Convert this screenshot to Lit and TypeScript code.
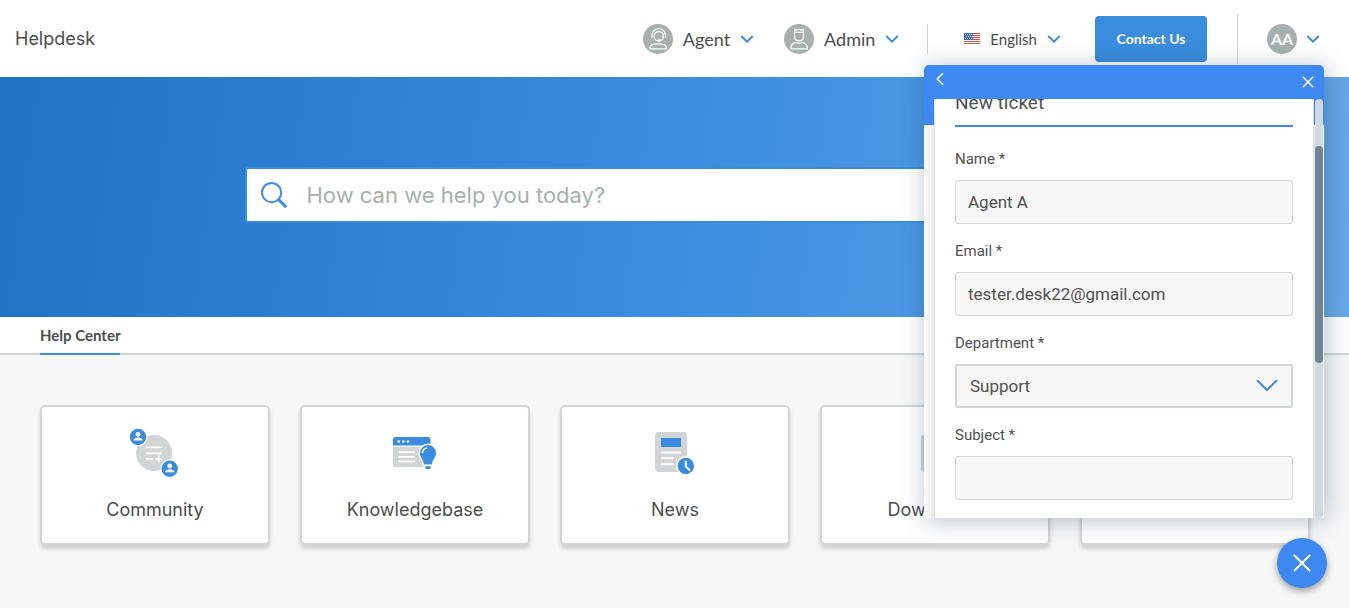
import { LitElement, html, svg, css, nothing } from "lit";
import { customElement, property } from "lit/decorators.js";

const chevron = html`<svg class="chevron" width="14" height="10" viewBox="0 0 14 10" aria-hidden="true">
  <path d="M1.3 2 L7 7.6 L12.7 2" fill="none" stroke="#3a8dde" stroke-width="2" />
</svg>`;

const person = (x: number, y: number) => svg`
  <circle cx=${x} cy=${y} r="9.4" fill="#fff" />
  <circle cx=${x} cy=${y} r="8.2" fill="#3a8dde" />
  <circle cx=${x} cy=${y - 2.7} r="2.4" fill="#fff" />
  <path transform="translate(${x} ${y})" d="M-4.7 3.6 C-4.5 1.4 -2 .6 0 .6 S4.5 1.4 4.7 3.6 Z" fill="#fff" />`;

const icons: Record<string, unknown> = {
  community: svg`
    <circle cx="23" cy="24" r="18" fill="#d1d5d5" />
    <path d="M15 18.3H31M15 24.3H31M15 30H22M24.2 30H31.2M27.7 26.5V33.5" stroke="#fff" stroke-width="1.7" />
    ${person(7, 8)} ${person(38.7, 39.7)}`,
  knowledge: svg`
    <path d="M2 17.7H39.5V38H4.5A2.5 2.5 0 0 1 2 35.5Z" fill="#d1d5d5" />
    <path d="M2 16.4V10.5A2.5 2.5 0 0 1 4.5 8H37A2.5 2.5 0 0 1 39.5 10.5V16.4Z" fill="#3a8dde" />
    <g fill="#fff"><circle cx="7.7" cy="12.5" r="1.3" /><circle cx="12.3" cy="12.5" r="1.3" /><circle cx="17" cy="12.5" r="1.3" /></g>
    <path d="M8 23.2H23.2M8 27.8H23.2M8 32.3H23.2" stroke="#fff" stroke-width="1.8" stroke-linecap="round" />
    <path d="M37 16A8.1 8.1 0 0 0 28.9 24.2C28.9 28.6 32.6 30 33 35.6H41C41.4 30 45.1 28.6 45.1 24.2A8.1 8.1 0 0 0 37 16ZM34.4 37.2H39.6V40H34.4Z" fill="#3a8dde" stroke="#fff" stroke-width="3" paint-order="stroke" />
    <path d="M31.4 23.6A5.5 5.5 0 0 1 35.6 18.9" fill="none" stroke="#fff" stroke-width="1.5" stroke-linecap="round" />`,
  news: svg`
    <rect x="4" y="3" width="32" height="40" rx="3" fill="#d1d5d5" />
    <rect x="10" y="9" width="20" height="9" fill="#3a8dde" />
    <path d="M10.8 23.4H29.2M10.8 29.2H22M10.8 35.3H22" stroke="#fff" stroke-width="2" stroke-linecap="round" />
    <circle cx="34.8" cy="37" r="10" fill="#fff" />
    <circle cx="34.8" cy="37" r="8.2" fill="#3a8dde" />
    <path d="M34.8 32.4V37.4L38.4 41" fill="none" stroke="#fff" stroke-width="2" stroke-linecap="round" />`,
  download: svg`
    <rect x="10" y="6" width="28" height="37" rx="3" fill="#d1d5d5" />
    <path d="M24 13V27M18 22L24 28L30 22" fill="none" stroke="#fff" stroke-width="2" />`,
};

@customElement("hc-card")
class HcCard extends LitElement {
  @property() label = "";
  @property() icon = "";

  static styles = css`
    :host { display: block; min-width: 0; }
    .card {
      display: flex; flex-direction: column; align-items: center; gap: 21px;
      box-sizing: border-box; height: 100%; min-height: 140px; padding: 22px 8px 21px;
      border: 2px solid #d1d5d5; border-radius: 5px; background: #fff;
      box-shadow: 0 4px 4px rgba(0, 0, 0, 0.16);
      color: #4b4d4d; text-decoration: none;
      font: 400 18px/24px Inter, sans-serif;
    }
    svg { overflow: visible; }
  `;

  render() {
    return html`<a class="card" href="#">
      <svg width="48" height="48" viewBox="0 0 48 48" aria-hidden="true">${icons[this.icon] ?? nothing}</svg>
      <span>${this.label}</span>
    </a>`;
  }
}

@customElement("ticket-panel")
class TicketPanel extends LitElement {
  static styles = css`
    :host {
      display: flex; flex-direction: column; border-radius: 5px 5px 0 0;
      background: #f9f9f9; color: #4f5151; font-family: Roboto, sans-serif;
      box-shadow: 2px 2px 24px rgba(20, 60, 90, 0.32);
    }
    button { border: 0; padding: 0; background: none; display: flex; cursor: pointer; }
    .bar {
      display: flex; justify-content: space-between; align-items: center;
      height: 34px; padding: 0 10px; box-sizing: border-box; flex: none;
      background: #3e88f1; border-radius: 5px 5px 0 0;
    }
    .back { margin-bottom: 6px; }
    .view {
      flex: 1; min-height: 0; display: flex; overflow: hidden;
      background: linear-gradient(#3e88f1 26px, transparent 26px);
    }
    .sheet {
      flex: 1; min-width: 0; margin-left: 10px; padding: 0 20px;
      background: #fff; border: solid #dcdedf; border-width: 0 1px;
      box-shadow: 0 26px 10px rgba(0, 0, 0, 0.14);
    }
    h2 {
      margin: -8px 0 22px; padding-bottom: 10px; border-bottom: 2px solid #3e88f1;
      font: 400 19px/24px Roboto, sans-serif;
    }
    .field { display: flex; flex-direction: column; gap: 11px; margin-bottom: 17px; }
    label { font-size: 15px; line-height: 20px; }
    .input {
      box-sizing: border-box; width: 100%; height: 44px; padding: 0 12px; margin: 0;
      border: 1px solid #d1d5d5; border-radius: 3px; background: #f7f7f7;
      color: #4f5151; font: 400 17px/24px Roboto, sans-serif; outline: none;
    }
    .select { display: grid; align-items: center; }
    .select > * { grid-area: 1 / 1; }
    select.input { appearance: none; border-width: 2px; padding: 0 13px; }
    .arrow { justify-self: end; margin-right: 15px; pointer-events: none; }
    .track { width: 8px; margin: 0 1px; border-radius: 4px; background: #d0d9e0; }
    .thumb { height: 217px; margin-top: 47px; border-radius: 4px; background: #6e8595; }
  `;

  private field(id: string, label: string, value: string, type = "text") {
    return html`<div class="field">
      <label for=${id}>${label}</label>
      <input class="input" id=${id} type=${type} .value=${value} />
    </div>`;
  }

  render() {
    return html`
      <div class="bar">
        <button class="back" aria-label="Back">
          <svg width="12" height="14" viewBox="0 0 12 14"><path d="M9 1.2L3.2 7L9 12.8" fill="none" stroke="#fff" stroke-width="1.5" /></svg>
        </button>
        <button aria-label="Close">
          <svg width="12" height="12" viewBox="0 0 12 12"><path d="M.8.8L11.2 11.2M11.2.8L.8 11.2" stroke="#fff" stroke-width="1.5" /></svg>
        </button>
      </div>
      <div class="view">
        <form class="sheet">
          <h2>New ticket</h2>
          ${this.field("name", "Name *", "Agent A")}
          ${this.field("email", "Email *", "tester.desk22@gmail.com", "email")}
          <div class="field">
            <label for="dept">Department *</label>
            <div class="select">
              <select class="input" id="dept"><option>Support</option></select>
              <svg class="arrow" width="22" height="14" viewBox="0 0 22 14"><path d="M1.6 1.8L11 11L20.4 1.8" fill="none" stroke="#3e88f1" stroke-width="2" stroke-linecap="round" /></svg>
            </div>
          </div>
          ${this.field("subject", "Subject *", "")}
        </form>
        <div class="track"><div class="thumb"></div></div>
      </div>`;
  }
}

@customElement("app-root")
class AppRoot extends LitElement {
  static styles = css`
    :host {
      display: block; position: relative; min-height: 100vh; overflow: hidden;
      background: #f7f7f7; color: #4b4d4d; font-family: Lato, sans-serif;
    }
    button { font: inherit; color: inherit; border: 0; padding: 0; background: none; cursor: pointer; }
    header {
      display: flex; align-items: center; min-height: 77px; box-sizing: border-box;
      padding: 0 29px 0 15px; background: #fff;
    }
    .brand { margin-right: auto; color: inherit; text-decoration: none; font: 400 18px/24px Inter, sans-serif; }
    .menu { display: flex; align-items: center; gap: 10px; font-size: 18px; line-height: 24px; }
    .menu + .menu { margin-left: 30px; }
    .menu svg { flex: none; }
    .small { font-size: 15px; }
    .account { gap: 9px; }
    .rule { width: 1px; height: 30px; background: #d1d5d5; margin: 0 36px 0 28px; }
    .tall { height: 50px; margin: 0 29px 0 30px; }
    .contact {
      height: 46px; min-width: 112px; padding: 0 20px; margin-left: 34px; border-radius: 4px;
      background: #3a8dde; color: #fff; font-weight: 700; font-size: 14px;
    }
    .avatar {
      display: grid; place-items: center; width: 30px; height: 30px; border-radius: 50%;
      background: #a7b0ae; color: #fff; font-weight: 700; font-size: 16px;
    }
    .hero {
      display: flex; justify-content: center; padding: 90px 40px 94px;
      background: linear-gradient(98deg, #2072c3, #3a8ddf 50%, #69a7e7);
    }
    .search {
      display: flex; align-items: center; gap: 19px; flex: 0 1 860px; height: 56px;
      box-sizing: border-box; padding: 0 13px; background: #fff;
      border: 2px solid #3a8dde; border-radius: 3px;
    }
    .search input {
      flex: 1; min-width: 0; border: 0; padding: 0; outline: none; background: none;
      font: 400 22px/30px Inter, sans-serif; color: #4b4d4d;
    }
    .search input::placeholder { color: #a7b0ae; opacity: 1; }
    nav { display: flex; padding: 0 40px; background: #fff; box-shadow: inset 0 -2px #d1d5d5; }
    nav a {
      padding: 7px 0; border-bottom: 2px solid #3a8dde; color: inherit;
      text-decoration: none; font-weight: 700; font-size: 15px; line-height: 22px;
    }
    .cards { display: grid; grid-template-columns: repeat(5, 1fr); gap: 30px; padding: 50px 39px 50px 40px; }
    .panel { position: absolute; top: 65px; right: 25px; width: 400px; height: 453px; }
    .fab {
      position: absolute; right: 22px; bottom: 20px; width: 50px; height: 50px;
      display: grid; place-items: center; border-radius: 50%; background: #3e88f1;
      box-shadow: 0 3px 7px rgba(0, 0, 0, 0.38);
    }
  `;

  render() {
    return html`
      <header>
        <a class="brand" href="#">Helpdesk</a>
        <button class="menu">
          <svg width="30" height="30" viewBox="0 0 30 30">
            <circle cx="15" cy="15" r="15" fill="#a7b0ae" />
            <g fill="none" stroke="#fff" stroke-width="1.2">
              <path d="M7 24.8H23.4V23.4C23.4 20.6 19.4 19.8 15.2 19.8S7 20.6 7 23.4Z" />
              <path d="M8.9 14V11.4A6.8 6.8 0 0 1 22.5 11.4V14" />
              <path d="M11.2 14V11.6A4.6 4.6 0 0 1 20.3 11.6V14" />
              <path d="M11.2 12.4C11.2 15.4 13.4 17 15.7 17S20.3 15.4 20.3 12.4" />
            </g>
            <rect x="14.4" y="15.2" width="3.6" height="2.2" rx="1" fill="#fff" />
          </svg>
          <span>Agent</span>${chevron}
        </button>
        <button class="menu">
          <svg width="30" height="30" viewBox="0 0 30 30">
            <circle cx="15" cy="15" r="15" fill="#a7b0ae" />
            <g fill="none" stroke="#fff" stroke-width="1.2">
              <path d="M7 24.8H23.2V23.2C23.2 20.2 20.2 19 17.7 18.4C16.5 19.6 13.7 19.6 12.5 18.4C10 19 7 20.2 7 23.2Z" />
              <path d="M10.6 5.4L12.6 6.2L15 5.2L17.4 6.2L19.5 5.4V12.2C19.5 15 17.5 16.8 15 16.8S10.6 15 10.6 12.2ZM10.6 8.4H19.5" />
            </g>
          </svg>
          <span>Admin</span>${chevron}
        </button>
        <div class="rule"></div>
        <button class="menu small">
          <svg width="16" height="11" viewBox="0 0 16 11">
            <rect width="16" height="11" fill="#fff" />
            <path d="M0 .5H16M0 2.5H16M0 4.5H16M0 6.5H16M0 8.5H16M0 10.5H16" stroke="#e0504a" />
            <rect width="9" height="7" fill="#3768c8" />
            <path d="M1 1.5H9M2 3.5H9M1 5.5H9" stroke="#fff" stroke-dasharray="1 1" />
            <path d="M0 10.5H16" stroke="#b96a45" />
          </svg>
          <span>English</span>${chevron}
        </button>
        <button class="contact">Contact Us</button>
        <div class="rule tall"></div>
        <button class="menu account" aria-label="Account">
          <span class="avatar">AA</span>${chevron}
        </button>
      </header>
      <section class="hero">
        <div class="search">
          <svg width="28" height="28" viewBox="0 0 28 28" aria-hidden="true">
            <circle cx="11.6" cy="11.6" r="9.6" fill="none" stroke="#3a8dde" stroke-width="2" />
            <path d="M18.4 18.4L26.2 26.2" stroke="#3a8dde" stroke-width="3" />
          </svg>
          <input type="search" aria-label="Search" placeholder="How can we help you today?" />
        </div>
      </section>
      <nav><a href="#">Help Center</a></nav>
      <main class="cards">
        <hc-card label="Community" icon="community"></hc-card>
        <hc-card label="Knowledgebase" icon="knowledge"></hc-card>
        <hc-card label="News" icon="news"></hc-card>
        <hc-card label="Downloads" icon="download"></hc-card>
        <hc-card></hc-card>
      </main>
      <ticket-panel class="panel"></ticket-panel>
      <button class="fab" aria-label="Close chat">
        <svg width="18" height="18" viewBox="0 0 18 18"><path d="M1.5 1.5L16.5 16.5M16.5 1.5L1.5 16.5" stroke="#fff" stroke-width="2" stroke-linecap="round" /></svg>
      </button>`;
  }
}
